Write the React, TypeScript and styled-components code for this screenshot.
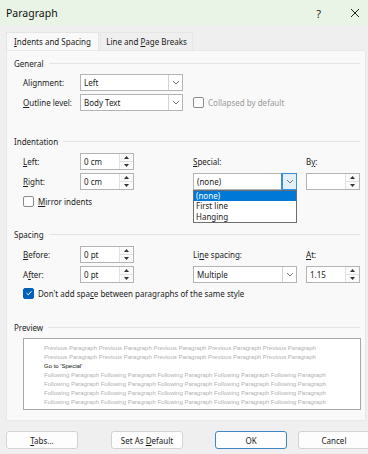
import styled, { createGlobalStyle } from 'styled-components';

const GlobalStyle = createGlobalStyle`
  html, body {
    margin: 0;
    padding: 0;
    background: #f0f0f0;
  }
  * {
    box-sizing: border-box;
  }
`;

const previousText = Array(5).fill('Previous Paragraph').join(' ');
const followingText = Array(5).fill('Following Paragraph').join(' ');

const Chevron = () => (
  <svg width="8" height="5" viewBox="0 0 8 5">
    <polyline points="1,1 4,4 7,1" fill="none" stroke="#6b6b6b" strokeWidth="0.9" />
  </svg>
);

const SpinArrows = () => (
  <SpinButtons>
    <SpinHalf>
      <svg width="5" height="3" viewBox="0 0 5 3">
        <polygon points="0,3 2.5,0 5,3" fill="#333" />
      </svg>
    </SpinHalf>
    <SpinHalf>
      <svg width="5" height="3" viewBox="0 0 5 3">
        <polygon points="0,0 2.5,3 5,0" fill="#333" />
      </svg>
    </SpinHalf>
  </SpinButtons>
);

const Combo = ({ value, width, open }: { value: string; width: number; open?: boolean }) => (
  <ComboBox $width={width}>
    <ComboValue>{value}</ComboValue>
    <ComboArrow $open={open}>
      <Chevron />
    </ComboArrow>
  </ComboBox>
);

const Spin = ({ value }: { value: string }) => (
  <SpinBox>
    <SpinValue>{value}</SpinValue>
    <SpinArrows />
  </SpinBox>
);

const App = () => {
  return (
    <>
      <GlobalStyle />
      <Window>
        <TitleBar>
          <Title>Paragraph</Title>
          <TitleButtons>
            <HelpGlyph>?</HelpGlyph>
            <CloseGlyph>
              <svg width="10" height="10" viewBox="0 0 10 10">
                <path d="M1 1 L9 9 M9 1 L1 9" stroke="#222" strokeWidth="1" />
              </svg>
            </CloseGlyph>
          </TitleButtons>
        </TitleBar>

        <TabStrip>
          <Tab $active>
            <span>
              <u>I</u>ndents and Spacing
            </span>
          </Tab>
          <Tab>
            <span>
              Line and <u>P</u>age Breaks
            </span>
          </Tab>
        </TabStrip>

        <Panel>
          {/* General */}
          <SectionHeading>
            <span>General</span>
          </SectionHeading>
          <GeneralGrid>
            <Label>Alignment:</Label>
            <Combo value="Left" width={103} />
            <span />
            <Label>
              <u>O</u>utline level:
            </Label>
            <Combo value="Body Text" width={103} />
            <CheckRow $disabled>
              <CheckBox />
              <span>Collapsed by default</span>
            </CheckRow>
          </GeneralGrid>

          {/* Indentation */}
          <SectionHeading $top={24}>
            <span>Indentation</span>
          </SectionHeading>
          <FormGrid>
            <Label>
              <u>L</u>eft:
            </Label>
            <Spin value="0 cm" />
            <span />
            <Label>
              <u>S</u>pecial:
            </Label>
            <span />
            <Label>
              B<u>y</u>:
            </Label>

            <Label>
              <u>R</u>ight:
            </Label>
            <Spin value="0 cm" />
            <span />
            <DropdownWrap>
              <Combo value="(none)" width={104} open />
              <DropList>
                <DropItem $selected>(none)</DropItem>
                <DropItem>First line</DropItem>
                <DropItem>Hanging</DropItem>
              </DropList>
            </DropdownWrap>
            <span />
            <Spin value="" />
          </FormGrid>
          <CheckRow $top={5}>
            <CheckBox />
            <span>
              <u>M</u>irror indents
            </span>
          </CheckRow>

          {/* Spacing */}
          <SectionHeading $top={21}>
            <span>Spacing</span>
          </SectionHeading>
          <FormGrid>
            <Label>
              <u>B</u>efore:
            </Label>
            <Spin value="0 pt" />
            <span />
            <Label>
              Li<u>n</u>e spacing:
            </Label>
            <span />
            <Label>
              <u>A</u>t:
            </Label>

            <Label>
              A<u>f</u>ter:
            </Label>
            <Spin value="0 pt" />
            <span />
            <Combo value="Multiple" width={104} />
            <span />
            <Spin value="1.15" />
          </FormGrid>
          <CheckRow $top={4}>
            <CheckBox $checked>
              <svg width="8" height="8" viewBox="0 0 8 8">
                <polyline points="1.5,4.2 3.2,5.8 6.5,2.2" fill="none" stroke="#fff" strokeWidth="1" />
              </svg>
            </CheckBox>
            <span>
              Don't add spa<u>c</u>e between paragraphs of the same style
            </span>
          </CheckRow>

          {/* Preview */}
          <SectionHeading $top={22}>
            <span>Preview</span>
          </SectionHeading>
          <PreviewBox>
            <PreviewLine>{previousText}</PreviewLine>
            <PreviewLine>{previousText}</PreviewLine>
            <PreviewLine $current>Go to 'Special'</PreviewLine>
            <PreviewLine>{followingText}</PreviewLine>
            <PreviewLine>{followingText}</PreviewLine>
            <PreviewLine>{followingText}</PreviewLine>
            <PreviewLine>{followingText}</PreviewLine>
          </PreviewBox>
        </Panel>

        <Footer>
          <Button>
            <span>
              <u>T</u>abs...
            </span>
          </Button>
          <Button $gap={33}>
            <span>
              Set As <u>D</u>efault
            </span>
          </Button>
          <Button $gap={32} $primary>
            <span>OK</span>
          </Button>
          <Button $gap={11}>
            <span>Cancel</span>
          </Button>
        </Footer>
      </Window>
    </>
  );
};

export default App;

const Window = styled.div`
  width: 368px;
  height: 454px;
  overflow: hidden;
  background: #efefef;
  font-family: 'Noto Sans', 'Open Sans', sans-serif;
  font-size: 8px;
  color: #1b1b1b;
  display: flex;
  flex-direction: column;

  u {
    text-decoration: underline;
    text-underline-offset: 1px;
  }
`;

const TitleBar = styled.div`
  height: 26px;
  flex-shrink: 0;
  background: #eaf4e6;
  display: flex;
  align-items: center;
  justify-content: space-between;
  padding: 0 8px 0 6px;
`;

const Title = styled.div`
  font-size: 10.5px;
  color: #111;
`;

const TitleButtons = styled.div`
  display: flex;
  align-items: center;
  gap: 29px;
`;

const HelpGlyph = styled.span`
  font-size: 11px;
  color: #222;
`;

const CloseGlyph = styled.span`
  display: flex;
  align-items: center;
`;

const TabStrip = styled.div`
  display: flex;
  margin: 6px 0 0 6px;
  height: 18px;
  position: relative;
  z-index: 1;
`;

const Tab = styled.div<{ $active?: boolean }>`
  width: 93px;
  height: 18px;
  display: flex;
  align-items: center;
  justify-content: center;
  white-space: nowrap;
  font-size: 8px;
  background: ${(p) => (p.$active ? '#f9f9f9' : '#efefef')};
  border: 1px solid ${(p) => (p.$active ? '#e4e4e4' : '#e6e6e6')};
  border-bottom: none;
  margin-right: 1px;
`;

const Panel = styled.div`
  margin: 0 2px 0 6px;
  height: 371px;
  flex-shrink: 0;
  background: #f9f9f9;
  border: 1px solid #e8e8e8;
  padding: 6px 5px 0 7px;
  display: flex;
  flex-direction: column;
`;

const SectionHeading = styled.div<{ $top?: number }>`
  display: flex;
  align-items: center;
  gap: 5px;
  height: 12px;
  margin-top: ${(p) => p.$top ?? 0}px;
  font-size: 8px;
  color: #222;

  &::after {
    content: '';
    flex: 1;
    height: 1px;
    background: #e3e3e3;
  }
`;

const GeneralGrid = styled.div`
  display: grid;
  grid-template-columns: 57px 103px auto;
  row-gap: 3px;
  margin: 5px 0 0 9px;
  align-items: center;

  & > *:nth-child(3n) {
    margin-left: 10px;
  }
`;

const FormGrid = styled.div`
  display: grid;
  grid-template-columns: 57px 54px 59px 104px 9px 54px;
  grid-auto-rows: 17px;
  row-gap: 3px;
  margin: 6px 0 0 9px;
  align-items: center;
`;

const Label = styled.span`
  font-size: 8px;
  color: #1b1b1b;
  white-space: nowrap;
`;

const ComboBox = styled.div<{ $width: number }>`
  width: ${(p) => p.$width}px;
  height: 17px;
  background: #fff;
  border: 1px solid #b4b4b4;
  display: flex;
  align-items: stretch;
`;

const ComboValue = styled.div`
  flex: 1;
  display: flex;
  align-items: center;
  padding-left: 3px;
  font-size: 8px;
`;

const ComboArrow = styled.div<{ $open?: boolean }>`
  width: 14px;
  display: flex;
  align-items: center;
  justify-content: center;
  border-left: 1px solid ${(p) => (p.$open ? '#3c8fd9' : '#d2d2d2')};
  background: ${(p) => (p.$open ? '#e3eff9' : '#fff')};
  outline: ${(p) => (p.$open ? '1px solid #3c8fd9' : 'none')};
`;

const SpinBox = styled.div`
  width: 54px;
  height: 17px;
  background: #fff;
  border: 1px solid #b4b4b4;
  display: flex;
`;

const SpinValue = styled.div`
  flex: 1;
  display: flex;
  align-items: center;
  padding-left: 3px;
  font-size: 8px;
`;

const SpinButtons = styled.div`
  width: 14px;
  display: flex;
  flex-direction: column;
  border-left: 1px solid #e2e2e2;
`;

const SpinHalf = styled.div`
  flex: 1;
  display: flex;
  align-items: center;
  justify-content: center;
  background: #fbfbfb;

  & + & {
    border-top: 1px solid #e2e2e2;
  }
`;

const DropdownWrap = styled.div`
  position: relative;
  height: 17px;
`;

const DropList = styled.div`
  position: absolute;
  top: 100%;
  left: 0;
  width: 104px;
  background: #fff;
  border: 1px solid #6e6e6e;
  z-index: 2;
`;

const DropItem = styled.div<{ $selected?: boolean }>`
  height: 10.3px;
  line-height: 10.3px;
  padding-left: 2px;
  font-size: 8px;
  background: ${(p) => (p.$selected ? '#0078d7' : 'transparent')};
  color: ${(p) => (p.$selected ? '#fff' : '#1b1b1b')};
`;

const CheckRow = styled.div<{ $top?: number; $disabled?: boolean }>`
  display: flex;
  align-items: center;
  gap: 4px;
  height: 12px;
  margin: ${(p) => p.$top ?? 0}px 0 0 ${(p) => (p.$disabled ? 0 : 9)}px;
  color: ${(p) => (p.$disabled ? '#9a9a9a' : '#1b1b1b')};
  font-size: 8px;
  white-space: nowrap;
`;

const CheckBox = styled.span<{ $checked?: boolean }>`
  width: 11px;
  height: 11px;
  border-radius: 2px;
  border: 1px solid ${(p) => (p.$checked ? '#005fb8' : '#8a8a8a')};
  background: ${(p) => (p.$checked ? '#005fb8' : '#fdfdfd')};
  display: flex;
  align-items: center;
  justify-content: center;
  flex-shrink: 0;
`;

const PreviewBox = styled.div`
  margin: 5px 0 0 9px;
  width: 338px;
  height: 72px;
  background: #fff;
  border: 1px solid #a8a8a8;
  overflow: hidden;
  padding: 5px 0 0 20px;
`;

const PreviewLine = styled.div<{ $current?: boolean }>`
  font-family: 'Liberation Sans', Arial, sans-serif;
  font-size: 6px;
  height: 9px;
  line-height: 9px;
  white-space: nowrap;
  color: ${(p) => (p.$current ? '#111' : '#b0b0b0')};
`;

const Footer = styled.div`
  display: flex;
  padding: 10px 0 0 6px;
`;

const Button = styled.div<{ $gap?: number; $primary?: boolean }>`
  width: 72px;
  height: 18px;
  flex-shrink: 0;
  margin-left: ${(p) => p.$gap ?? 0}px;
  background: #fdfdfd;
  border: 1px solid ${(p) => (p.$primary ? '#3d86c6' : '#d3d3d3')};
  border-radius: 3px;
  display: flex;
  align-items: center;
  justify-content: center;
  font-size: 8px;
  color: #1b1b1b;
`;
